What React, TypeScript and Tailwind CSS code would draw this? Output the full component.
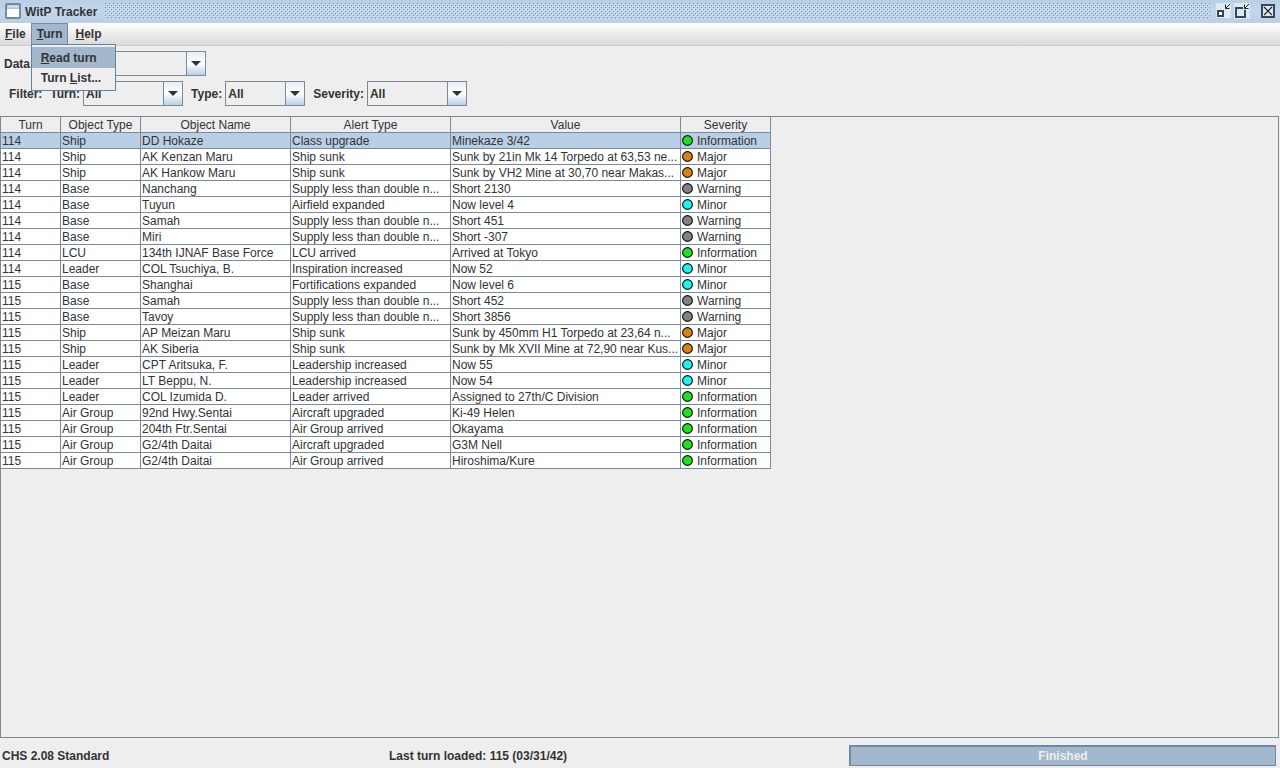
import type { ReactNode } from "react";

type Severity = "Information" | "Major" | "Warning" | "Minor";

type Alert = [string, string, string, string, string, Severity];

const columns = [ "Turn", "Object Type", "Object Name", "Alert Type", "Value", "Severity" ];

const alerts: Alert[] = [
  ["114", "Ship", "DD Hokaze", "Class upgrade", "Minekaze 3/42", "Information"],
  ["114", "Ship", "AK Kenzan Maru", "Ship sunk", "Sunk by 21in Mk 14 Torpedo at 63,53 ne...", "Major"],
  ["114", "Ship", "AK Hankow Maru", "Ship sunk", "Sunk by VH2 Mine at 30,70 near Makas...", "Major"],
  ["114", "Base", "Nanchang", "Supply less than double n...", "Short 2130", "Warning"],
  ["114", "Base", "Tuyun", "Airfield expanded", "Now level 4", "Minor"],
  ["114", "Base", "Samah", "Supply less than double n...", "Short 451", "Warning"],
  ["114", "Base", "Miri", "Supply less than double n...", "Short -307", "Warning"],
  ["114", "LCU", "134th IJNAF Base Force", "LCU arrived", "Arrived at Tokyo", "Information"],
  ["114", "Leader", "COL Tsuchiya, B.", "Inspiration increased", "Now 52", "Minor"],
  ["115", "Base", "Shanghai", "Fortifications expanded", "Now level 6", "Minor"],
  ["115", "Base", "Samah", "Supply less than double n...", "Short 452", "Warning"],
  ["115", "Base", "Tavoy", "Supply less than double n...", "Short 3856", "Warning"],
  ["115", "Ship", "AP Meizan Maru", "Ship sunk", "Sunk by 450mm H1 Torpedo at 23,64 n...", "Major"],
  ["115", "Ship", "AK Siberia", "Ship sunk", "Sunk by Mk XVII Mine at 72,90 near Kus...", "Major"],
  ["115", "Leader", "CPT Aritsuka, F.", "Leadership increased", "Now 55", "Minor"],
  ["115", "Leader", "LT Beppu, N.", "Leadership increased", "Now 54", "Minor"],
  ["115", "Leader", "COL Izumida D.", "Leader arrived", "Assigned to 27th/C Division", "Information"],
  ["115", "Air Group", "92nd Hwy.Sentai", "Aircraft upgraded", "Ki-49 Helen", "Information"],
  ["115", "Air Group", "204th Ftr.Sentai", "Air Group arrived", "Okayama", "Information"],
  ["115", "Air Group", "G2/4th Daitai", "Aircraft upgraded", "G3M Nell", "Information"],
  ["115", "Air Group", "G2/4th Daitai", "Air Group arrived", "Hiroshima/Kure", "Information"],
];

const severityColors: Record<Severity, string> = {
  Information: "#1fe01f",
  Major: "#d98214",
  Warning: "#828282",
  Minor: "#1ff0f0",
};

const SeverityIcon = ({ severity }: { severity: Severity }) => (
  <svg width="11" height="11" viewBox="0 0 11 11" className="shrink-0" aria-hidden="true">
    <circle cx="5.5" cy="5.5" r="4.9" fill={ severityColors[severity] } stroke="#111" strokeWidth="1.1" />
  </svg>
);

const TitleBar = () => (
  <header className="flex h-[23px] items-start bg-linear-to-b from-[#b8cfe5] via-[#c3d7ea] to-[#b8cfe5] pt-[3px] pl-[5px] pr-1">
    <svg width="16" height="16" viewBox="0 0 16 16" aria-hidden="true">
      <rect x="1" y="1" width="14" height="14" rx="1" fill="#fff" stroke="#7089a5" strokeWidth="2" />
      <rect x="2" y="2" width="12" height="3" fill="#b8cfe5" />
      <path d="M3 3.5h10" stroke="#fff" strokeDasharray="1 1" />
      <path d="M2 5.5h12" stroke="#b8c4d0" />
    </svg>
    <h1 className="ml-1 text-[12px] font-bold leading-[18px]">WitP Tracker</h1>
    <svg className="ml-2 h-4 min-w-0 flex-1" aria-hidden="true">
      <defs>
        <pattern id="bumps" width="4" height="4" patternUnits="userSpaceOnUse">
          <path d="M0 0h1v1h-1zM2 2h1v1h-1z" fill="#6487b5" />
          <path d="M1 1h1v1h-1zM3 3h1v1h-1z" fill="#dce9f6" />
        </pattern>
      </defs>
      <rect width="100%" height="100%" fill="url(#bumps)" />
    </svg>
    <div className="ml-[6px] flex items-center">
      <button aria-label="Minimize">
        <svg width="16" height="16" viewBox="0 0 16 16">
          <path d="M0 0h15v15h-15z" fill="#dfe9f4" />
          <path d="M2 8h5v5h-5z" fill="#fff" stroke="#33485f" strokeWidth="2" />
          <path d="M9.5 1.5v4h4M9.500 5.500l4.500-4.500" fill="none" stroke="#222" />
        </svg>
      </button>
      <button aria-label="Restore" className="ml-[2px]">
        <svg width="16" height="16" viewBox="0 0 16 16">
          <path d="M0 0h16v16h-16z" fill="#dfe9f4" />
          <path d="M9 5h-7v9h9v-7" fill="none" stroke="#33485f" strokeWidth="2" />
          <path d="M10.500 1.500v4h4M10.500 5.500l4.500-4.500" fill="none" stroke="#222" />
        </svg>
      </button>
      <button aria-label="Close" className="ml-[10px]">
        <svg width="16" height="16" viewBox="0 0 16 16">
          <path d="M2 2h12v12h-12z" fill="#dfe9f4" stroke="#33485f" strokeWidth="2" />
          <path d="M4 4l8 8M12 4l-8 8" stroke="#222" strokeWidth="1.200" />
        </svg>
      </button>
    </div>
  </header>
);

const MenuBar = () => (
  <nav className="flex h-[23px] border-b border-[#ccc] bg-linear-to-b from-white to-[#dadada] leading-5">
    <button className="h-[22px] px-[5px]"><u>F</u>ile</button>
    <div className="relative">
      <button className="h-[22px] border-x border-t border-[#7a8a99] bg-[#a3b8cc] px-[5px] pb-px"><u>T</u>urn</button>
      <div className="absolute left-0 top-[21px] z-10 w-[85px] border border-[#6382a0] bg-[#eee] pt-[2px] pb-[2px]">
        <button className="block h-[21px] w-full bg-[#a3b8cc] pl-[9px] text-left"><u>R</u>ead turn</button>
        <button className="block h-5 w-full pl-[9px] text-left">Turn <u>L</u>ist...</button>
      </div>
    </div>
    <button className="h-[22px] px-[7px]"><u>H</u>elp</button>
  </nav>
);

const ComboBox = ({ id, value, width }: { id: string; value: string; width: string }) => (
  <span className={`relative inline-flex h-[25px] ${ width }`}>
    <select
      id={ id }
      className="h-full w-full appearance-none border border-[#7a8a99] bg-[#eee] pl-[2px] font-bold leading-4"
    >
      <option>{ value }</option>
    </select>
    <span className="pointer-events-none absolute inset-y-0 right-0 flex w-5 items-center justify-center border border-[#7a8a99] bg-linear-to-b from-[#e8eff6] via-white to-[#b8cfe5]">
      <svg width="10" height="5" viewBox="0 0 10 5" aria-hidden="true">
        <path d="M0 0h10l-5 5z" fill="#333" />
      </svg>
    </span>
  </span>
);

const Field = ({ id, label, children }: { id: string; label: string; children: ReactNode }) => (
  <div className="flex items-center gap-[3px]">
    <label htmlFor={ id }>{ label }</label>
    { children }
  </div>
);

const Filters = () => (
  <section className="flex flex-col gap-[5px] pt-[5px] pb-[10px]">
    <div className="flex pl-1">
      <Field id="data" label="Data:">
        <ComboBox id="data" value="" width="w-[169px]" />
      </Field>
    </div>
    <div className="flex items-center gap-2 pl-[9px]">
      <span>Filter:</span>
      <Field id="turn" label="Turn:">
        <ComboBox id="turn" value="All" width="w-[100px]" />
      </Field>
      <Field id="type" label="Type:">
        <ComboBox id="type" value="All" width="w-[80px]" />
      </Field>
      <Field id="severity" label="Severity:">
        <ComboBox id="severity" value="All" width="w-[100px]" />
      </Field>
    </div>
  </section>
);

const AlertTable = () => (
  <table className="w-[770px] table-fixed border-separate border-spacing-0 font-normal leading-[13px]">
    <colgroup>
      <col className="w-[60px]" />
      <col className="w-[80px]" />
      <col className="w-[150px]" />
      <col className="w-[160px]" />
      <col className="w-[230px]" />
      <col className="w-[90px]" />
    </colgroup>
    <thead>
      <tr>
        { columns.map( ( column ) => (
          <th key={ column } className="h-4 border-r border-b border-[#7a8a99] bg-[#eee] p-0 pt-[2px] font-normal">
            { column }
          </th>
        )) }
      </tr>
    </thead>
    <tbody>
      { alerts.map( ( alert, row ) => (
        <tr key={ row } className={ row === 0 ? "bg-[#b8cfe5]" : "bg-white" }>
          { alert.slice( 0, 5 ).map( ( text, i ) => (
            <td key={ i } className="h-4 overflow-hidden border-r border-b border-[#7a8a99] p-0 pt-[2px] pl-px whitespace-nowrap">
              { text }
            </td>
          )) }
          <td className="h-4 border-r border-b border-[#7a8a99] p-0 pl-px">
            <div className="flex items-center gap-1">
              <SeverityIcon severity={ alert[5] } />
              <span className="pt-[2px]">{ alert[5] }</span>
            </div>
          </td>
        </tr>
      )) }
    </tbody>
  </table>
);

const StatusBar = () => (
  <footer className="grid h-[30px] grid-cols-[387fr_460fr_427fr] items-center pt-[7px] pr-1 pb-[2px] pl-[2px]">
    <span>CHS 2.08 Standard</span>
    <span>Last turn loaded: 115 (03/31/42)</span>
    <div
      role="progressbar"
      aria-valuenow={ 100 }
      className="h-[21px] border border-t-2 border-l-2 border-[#6f8aa6] bg-[#a3b8cc] text-center leading-[18px] text-[#eee]"
    >
      Finished
    </div>
  </footer>
);

export default function App() {
  return (
    <div className="flex min-h-screen flex-col bg-[#eee] font-['Liberation_Sans',Arial,sans-serif] text-[12px] font-bold text-[#333]">
      <TitleBar />
      <MenuBar />
      <Filters />
      <main className="mr-px flex-1 border border-[#7a8a99]">
        <AlertTable />
      </main>
      <StatusBar />
    </div>
  );
}
